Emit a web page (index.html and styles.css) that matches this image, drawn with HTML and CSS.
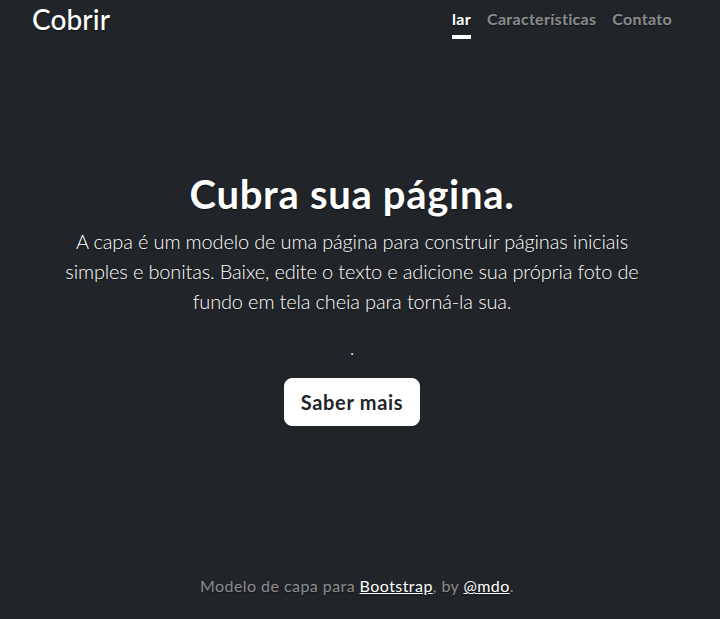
FILE: index.html
```html
<!DOCTYPE html>
<html lang="pt">
<head>
<meta charset="utf-8">
<title>Cobrir</title>
<link rel="stylesheet" href="styles.css">
</head>
<body>
<div class="cover">
  <header class="masthead">
    <h3 class="brand">Cobrir</h3>
    <nav class="nav">
      <a class="nav-link active" href="#">lar</a>
      <a class="nav-link" href="#">Características</a>
      <a class="nav-link" href="#">Contato</a>
    </nav>
  </header>
  <main class="hero">
    <h1 class="title">Cubra sua página.</h1>
    <p class="lead">A capa é um modelo de uma página para construir páginas iniciais simples e bonitas. Baixe, edite o texto e adicione sua própria foto de fundo em tela cheia para torná-la sua.</p>
    <p class="lead">.</p>
    <p class="lead"><a href="#" class="btn">Saber mais</a></p>
  </main>
  <footer class="footer">
    <p>Modelo de capa para <a href="#">Bootstrap</a>, by <a href="#">@mdo</a>.</p>
  </footer>
</div>
</body>
</html>
```
FILE: styles.css
```css
html, body {
  height: 100%;
}
body {
  margin: 0;
  padding-right: 16px;
  display: flex;
  background: #212529;
  color: #fff;
  font-family: Lato, "Open Sans", sans-serif;
  text-shadow: 0 0.05rem 0.1rem rgba(0, 0, 0, 0.5);
  text-align: center;
}
.cover {
  box-sizing: border-box;
  display: flex;
  flex-direction: column;
  width: 100%;
  max-width: 672px;
  margin: 0 auto;
  padding: 3px 16px 21px;
}
.masthead {
  display: flex;
  justify-content: space-between;
  align-items: flex-start;
}
.brand {
  margin: 0;
  font-size: 28px;
  font-weight: 500;
  line-height: 1.2;
  letter-spacing: 0.1px;
}
.nav {
  display: flex;
  gap: 16px;
}
.nav-link {
  padding: 4px 0;
  font-weight: 700;
  font-size: 16px;
  line-height: 24px;
  letter-spacing: 0.3px;
  color: rgba(255, 255, 255, 0.5);
  text-decoration: none;
  border-bottom: 4px solid transparent;
}
.nav-link.active {
  color: #fff;
  border-bottom-color: #fff;
}
.hero {
  padding: 0 16px;
  margin-top: 131px;
}
.title {
  margin: 0 0 8px;
  font-size: 40px;
  font-weight: 700;
  line-height: 1.2;
  letter-spacing: 0.7px;
}
.lead {
  margin: 0 0 16px;
  font-size: 20px;
  font-weight: 300;
  line-height: 1.5;
  letter-spacing: -0.16px;
}
.btn {
  display: inline-block;
  padding: 8px 16px;
  font-size: 20px;
  line-height: 1.5;
  font-weight: 700;
  letter-spacing: 0.7px;
  color: #212529;
  background: #fff;
  border: 1px solid #fff;
  border-radius: 8px;
  text-decoration: none;
  text-shadow: none;
}
.footer {
  margin-top: auto;
  padding-left: 10px;
  color: rgba(255, 255, 255, 0.5);
  font-size: 16px;
  line-height: 24px;
  letter-spacing: 0.44px;
}
.footer p {
  margin: 0;
}
.footer a {
  color: #fff;
}
```
